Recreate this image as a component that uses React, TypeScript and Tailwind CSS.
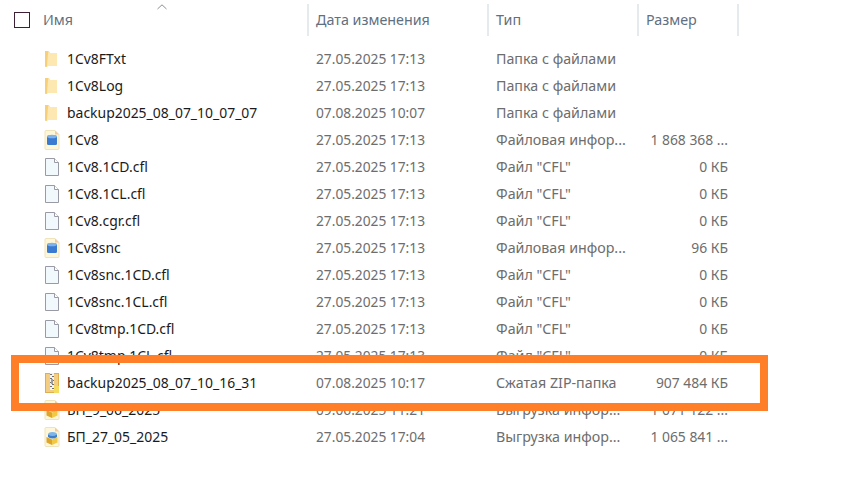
const FONT = "font-['Noto_Sans',sans-serif]";

type Kind = "folder" | "db" | "file" | "zip" | "dt";

const ROWS: { name: string; date: string; type: string; size: string; kind: Kind }[] = [
  { name: "1Cv8FTxt", date: "27.05.2025 17:13", type: "Папка с файлами", size: "", kind: "folder" },
  { name: "1Cv8Log", date: "27.05.2025 17:13", type: "Папка с файлами", size: "", kind: "folder" },
  { name: "backup2025_08_07_10_07_07", date: "07.08.2025 10:07", type: "Папка с файлами", size: "", kind: "folder" },
  { name: "1Cv8", date: "27.05.2025 17:13", type: "Файловая инфор...", size: "1 868 368 ...", kind: "db" },
  { name: "1Cv8.1CD.cfl", date: "27.05.2025 17:13", type: 'Файл "CFL"', size: "0 КБ", kind: "file" },
  { name: "1Cv8.1CL.cfl", date: "27.05.2025 17:13", type: 'Файл "CFL"', size: "0 КБ", kind: "file" },
  { name: "1Cv8.cgr.cfl", date: "27.05.2025 17:13", type: 'Файл "CFL"', size: "0 КБ", kind: "file" },
  { name: "1Cv8snc", date: "27.05.2025 17:13", type: "Файловая инфор...", size: "96 КБ", kind: "db" },
  { name: "1Cv8snc.1CD.cfl", date: "27.05.2025 17:13", type: 'Файл "CFL"', size: "0 КБ", kind: "file" },
  { name: "1Cv8snc.1CL.cfl", date: "27.05.2025 17:13", type: 'Файл "CFL"', size: "0 КБ", kind: "file" },
  { name: "1Cv8tmp.1CD.cfl", date: "27.05.2025 17:13", type: 'Файл "CFL"', size: "0 КБ", kind: "file" },
  { name: "1Cv8tmp.1CL.cfl", date: "27.05.2025 17:13", type: 'Файл "CFL"', size: "0 КБ", kind: "file" },
  { name: "backup2025_08_07_10_16_31", date: "07.08.2025 10:17", type: "Сжатая ZIP-папка", size: "907 484 КБ", kind: "zip" },
  { name: "БП_9_06_2025", date: "09.06.2025 11:21", type: "Выгрузка инфор...", size: "1 071 122 ...", kind: "dt" },
  { name: "БП_27_05_2025", date: "27.05.2025 17:04", type: "Выгрузка инфор...", size: "1 065 841 ...", kind: "dt" },
];

function FileIcon({ kind }: { kind: Kind }) {
  if (kind === "folder") {
    return (
      <svg width="14" height="18" viewBox="0 0 14 18">
        <path d="M1 1h4l1 2h7v13H3l-2 1z" fill="#fbe2a2" />
        <path d="M1 1h3v14l-1 2-2-.5z" fill="#f7cf78" />
        <path d="M4 3h9v13H3z" fill="#fde8b2" />
      </svg>
    );
  }
  if (kind === "file") {
    return (
      <svg width="16" height="20" viewBox="0 0 16 20">
        <path d="M1.5 1.5h9l4 4v13h-13z" fill="#f1f9fc" stroke="#9a9aa6" />
        <path d="M10.500 1.500v4h4" fill="#fff" stroke="#9a9aa6" />
      </svg>
    );
  }
  if (kind === "zip") {
    return (
      <svg width="16" height="20" viewBox="0 0 16 20">
        <rect x="1.500" y="0.500" width="13" height="19" fill="#f3cd82" stroke="#e0ae4c" />
        <rect x="10" y="13" width="5" height="7" fill="#f5dc5e" />
        <rect x="6" y="0" width="4" height="17" fill="#f2f2f2" />
        <path d="M6 1.500h2M8 3.500h2M6 5.500h2M8 7.500h2M6 9.500h2M8 11.500h2M6 13.500h2M8 15.500h2" stroke="#6f6f6f" />
        <rect x="7" y="6" width="2" height="5" fill="#9c9c9c" />
      </svg>
    );
  }
  return (
    <svg width="16" height="20" viewBox="0 0 16 20">
      <path d="M1 1.500q0-1 1-1h9l4 4v14q0 1-1 1H2q-1 0-1-1z" fill="#fdf6d8" stroke="#efe3bc" />
      <path d="M11 .5v4h4" fill="#f3c9a0" />
      {kind === "db" ? (
        <>
          <rect x="3" y="5.500" width="10" height="9.500" rx="1.500" fill="#3a7ad0" />
          <ellipse cx="8" cy="6.500" rx="5" ry="1.800" fill="#7fb2ea" />
        </>
      ) : (
        <>
          <path d="M2.500 10l5.500 2.500V18l-5.500-2.500z" fill="#dca52c" />
          <path d="M8 12.500l5.500-2.500v5.500L8 18z" fill="#f3c844" />
          <ellipse cx="8.500" cy="7.500" rx="4.500" ry="2.600" fill="#7db4ea" />
          <path d="M4 7.500v2.500q4.500 3 9 0V7.500q-4.500 3-9 0" fill="#3f7fc7" />
        </>
      )}
    </svg>
  );
}

function HeaderCell({ label, className }: { label: string; className: string }) {
  return (
    <div className={`flex h-[32px] items-center border-r-2 border-[#e5eaec] text-[14.3px] text-[#5f7080] ${className}`}>
      {label}
    </div>
  );
}

export default function App() {
  return (
    <div className={`relative h-[493px] w-[864px] overflow-hidden bg-white ${FONT}`}>
      <svg className="absolute left-[157px] top-[4px]" width="10" height="6" viewBox="0 0 10 6">
        <path d="M.5 5 5 .8 9.500 5" fill="none" stroke="#8a8f96" />
      </svg>

      <div className="flex pt-[4px]">
        <div className="flex h-[32px] w-[43px] shrink-0 items-center pl-[14px]">
          <div className="h-[16px] w-[16px] border-[1.5px] border-[#3d2036]" />
        </div>
        <HeaderCell label="Имя" className="w-[266px]" />
        <HeaderCell label="Дата изменения" className="w-[180px] pl-[7px]" />
        <HeaderCell label="Тип" className="w-[150px] pl-[7px]" />
        <HeaderCell label="Размер" className="w-[100px] pl-[7px]" />
      </div>

      <div className="flex flex-col pt-[9px]">
        {ROWS.map((row) => (
          <div key={row.name} className="flex h-[27px] items-center leading-[20px]">
            <div className="flex w-[67px] shrink-0 justify-start pl-[44px]">
              <FileIcon kind={row.kind} />
            </div>
            <div className="w-[249px] shrink-0 text-[13.95px] text-[#1b1b1b]">{row.name}</div>
            <div className="w-[180px] shrink-0 text-[13.75px] text-[#6d6d6d]">{row.date}</div>
            <div className="w-[138px] shrink-0 text-[14.25px] text-[#6d6d6d]">{row.type}</div>
            <div className="w-[94px] shrink-0 text-right text-[13.9px] text-[#6d6d6d]">{row.size}</div>
          </div>
        ))}
      </div>

      <div className="absolute left-[11px] top-[355px] h-[56px] w-[757px] border-[8px] border-[#fe7f27]" />
    </div>
  );
}
